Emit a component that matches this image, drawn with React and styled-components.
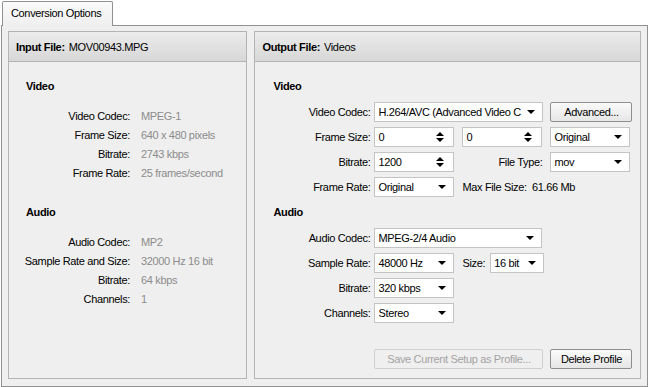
import React from "react";
import styled, { createGlobalStyle } from "styled-components";

const GlobalStyle = createGlobalStyle`
  html, body {
    margin: 0;
    padding: 0;
    background: #fff;
  }
  body {
    font-family: "Liberation Sans", Arial, sans-serif;
    font-size: 11px;
    letter-spacing: -0.35px;
    color: #000;
  }
`;

const Window = styled.div`
  width: 649px;
  height: 387px;
  display: flex;
  flex-direction: column;
  padding: 1px 1px 0 1px;
  box-sizing: border-box;
`;

const TabStrip = styled.div`
  display: flex;
  height: 24px;
  padding-left: 1px;
`;

const Tab = styled.div`
  width: 111px;
  box-sizing: border-box;
  border: 1px solid #919191;
  border-bottom: none;
  border-radius: 2px 2px 0 0;
  background: linear-gradient(#fbfbfb, #efefef);
  padding: 5px 0 0 8px;
  position: relative;
  margin-bottom: -1px;
  z-index: 1;
`;

const Pane = styled.div`
  flex: 1;
  border: 1px solid #919191;
  background: #efefef;
  display: flex;
  gap: 7px;
  padding: 5px 6px 7px 6px;
  box-sizing: border-box;
`;

const Panel = styled.div`
  width: ${(p) => p.$w}px;
  border: 1px solid #b4b4b4;
  display: flex;
  flex-direction: column;
  background: #efefef;
`;

const PanelHeader = styled.div`
  height: 29px;
  border-bottom: 1px solid #b4b4b4;
  background: linear-gradient(#ececec, #d7d7d7);
  display: flex;
  align-items: center;
  padding-left: 7px;
  b {
    margin-right: 4px;
  }
`;

const Body = styled.div`
  flex: 1;
  display: flex;
  flex-direction: column;
  padding: 15px 0 9px 0;
`;

const Heading = styled.div`
  font-weight: bold;
  line-height: 19px;
  padding-left: ${(p) => p.$pad}px;
  margin-top: ${(p) => p.$mt || 0}px;
`;

const InfoGrid = styled.div`
  display: grid;
  grid-template-columns: 121px 1fr;
  column-gap: 11px;
  grid-auto-rows: 19px;
  align-items: center;
  margin-top: 10px;
`;

const InfoLabel = styled.div`
  text-align: right;
  white-space: nowrap;
`;

const InfoValue = styled.div`
  color: #8c8c8c;
  white-space: nowrap;
`;

const Form = styled.div`
  display: flex;
  flex-direction: column;
  gap: 5px;
  margin-top: 6px;
`;

const Row = styled.div`
  display: flex;
  align-items: center;
  height: 20px;
`;

const Label = styled.div`
  width: ${(p) => p.$w || 115}px;
  text-align: right;
  margin-right: ${(p) => (p.$mr !== undefined ? p.$mr : 4)}px;
  white-space: nowrap;
`;

const Text = styled.div`
  margin-right: ${(p) => p.$mr || 0}px;
  white-space: nowrap;
`;

const Field = styled.div`
  width: ${(p) => p.$w}px;
  height: 20px;
  box-sizing: border-box;
  border: 1px solid #c4c4c4;
  background: #fff;
  display: flex;
  align-items: center;
  padding: 0 0 0 3px;
  margin-right: ${(p) => p.$mr || 0}px;
  span {
    flex: 1;
    white-space: nowrap;
  }
`;

const Arrow = styled.div`
  width: 0;
  height: 0;
  border-left: 4px solid transparent;
  border-right: 4px solid transparent;
  border-top: 4px solid #000;
  margin: 0 7px 0 4px;
`;

const Spin = styled.div`
  display: flex;
  flex-direction: column;
  gap: 2px;
  margin-right: 9px;
  i {
    width: 0;
    height: 0;
    border-left: 4px solid transparent;
    border-right: 4px solid transparent;
  }
  i:first-child {
    border-bottom: 4px solid #000;
  }
  i:last-child {
    border-top: 4px solid #000;
  }
`;

const Button = styled.div`
  width: ${(p) => p.$w}px;
  height: 20px;
  box-sizing: border-box;
  border: 1px solid ${(p) => (p.$disabled ? "#cfcfcf" : "#8e8e8e")};
  border-radius: 2px;
  background: ${(p) =>
    p.$disabled ? "#efefef" : "linear-gradient(#fafafa, #e6e6e6)"};
  color: ${(p) => (p.$disabled ? "#a3a3a3" : "#000")};
  display: flex;
  align-items: center;
  justify-content: center;
  margin-left: ${(p) => p.$ml || 0}px;
  white-space: nowrap;
`;

const Footer = styled.div`
  margin-top: auto;
  display: flex;
  padding-left: 119px;
`;

const Select = ({ w, mr, children }) => (
  <Field $w={w} $mr={mr}>
    <span>{children}</span>
    <Arrow />
  </Field>
);

const Spinner = ({ w, mr, children }) => (
  <Field $w={w} $mr={mr}>
    <span>{children}</span>
    <Spin>
      <i />
      <i />
    </Spin>
  </Field>
);

const inputVideo = [
  ["Video Codec:", "MPEG-1"],
  ["Frame Size:", "640 x 480 pixels"],
  ["Bitrate:", "2743 kbps"],
  ["Frame Rate:", "25 frames/second"],
];

const inputAudio = [
  ["Audio Codec:", "MP2"],
  ["Sample Rate and Size:", "32000 Hz 16 bit"],
  ["Bitrate:", "64 kbps"],
  ["Channels:", "1"],
];

const InfoList = ({ rows }) => (
  <InfoGrid>
    {rows.map(([label, value]) => (
      <React.Fragment key={label}>
        <InfoLabel>{label}</InfoLabel>
        <InfoValue>{value}</InfoValue>
      </React.Fragment>
    ))}
  </InfoGrid>
);

export default function App() {
  return (
    <>
      <GlobalStyle />
      <Window>
        <TabStrip>
          <Tab>Conversion Options</Tab>
        </TabStrip>
        <Pane>
          <Panel $w={239}>
            <PanelHeader>
              <b>Input File:</b> MOV00943.MPG
            </PanelHeader>
            <Body>
              <Heading $pad={17}>Video</Heading>
              <InfoList rows={inputVideo} />
              <Heading $pad={17} $mt={21}>
                Audio
              </Heading>
              <InfoList rows={inputAudio} />
            </Body>
          </Panel>

          <Panel $w={387}>
            <PanelHeader>
              <b>Output File:</b> Videos
            </PanelHeader>
            <Body>
              <Heading $pad={18}>Video</Heading>
              <Form>
                <Row>
                  <Label>Video Codec:</Label>
                  <Select w={169}>H.264/AVC (Advanced Video C</Select>
                  <Button $w={82} $ml={7}>
                    Advanced...
                  </Button>
                </Row>
                <Row>
                  <Label>Frame Size:</Label>
                  <Spinner w={80} mr={8}>
                    0
                  </Spinner>
                  <Spinner w={80} mr={8}>
                    0
                  </Spinner>
                  <Select w={80}>Original</Select>
                </Row>
                <Row>
                  <Label>Bitrate:</Label>
                  <Spinner w={80}>1200</Spinner>
                  <Label $w={88} $mr={8}>
                    File Type:
                  </Label>
                  <Select w={80}>mov</Select>
                </Row>
                <Row>
                  <Label>Frame Rate:</Label>
                  <Select w={80} mr={8}>
                    Original
                  </Select>
                  <Text>Max File Size:&nbsp; 61.66 Mb</Text>
                </Row>
              </Form>

              <Heading $pad={18} $mt={6}>
                Audio
              </Heading>
              <Form>
                <Row>
                  <Label>Audio Codec:</Label>
                  <Select w={168}>MPEG-2/4 Audio</Select>
                </Row>
                <Row>
                  <Label>Sample Rate:</Label>
                  <Select w={80} mr={8}>
                    48000 Hz
                  </Select>
                  <Text $mr={5}>Size:</Text>
                  <Select w={54}>16 bit</Select>
                </Row>
                <Row>
                  <Label>Bitrate:</Label>
                  <Select w={80}>320 kbps</Select>
                </Row>
                <Row>
                  <Label>Channels:</Label>
                  <Select w={80}>Stereo</Select>
                </Row>
              </Form>

              <Footer>
                <Button $w={169} $disabled>
                  Save Current Setup as Profile...
                </Button>
                <Button $w={82} $ml={7}>
                  Delete Profile
                </Button>
              </Footer>
            </Body>
          </Panel>
        </Pane>
      </Window>
    </>
  );
}
